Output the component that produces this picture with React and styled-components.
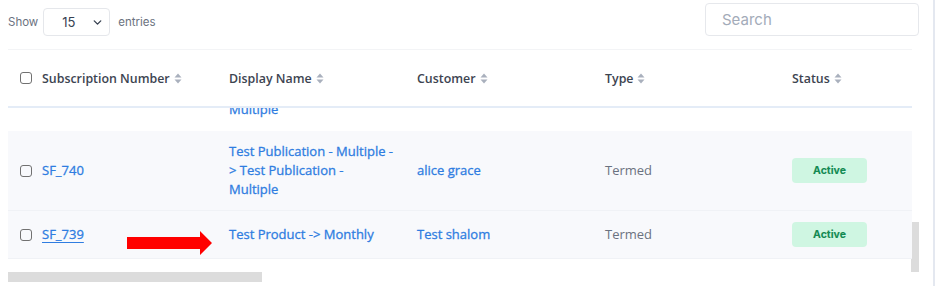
import React from "react";
import styled, { createGlobalStyle } from "styled-components";
import { ChevronDown } from "lucide-react";

const GlobalStyle = createGlobalStyle`
  html, body {
    margin: 0;
    padding: 0;
    background: #fff;
  }
  body {
    font-family: "Open Sans", "Noto Sans", sans-serif;
  }
`;

const Page = styled.div`
  width: 933px;
  height: 286px;
  border-right: 2px solid #e4e8f0;
  overflow: hidden;
`;

const Toolbar = styled.div`
  display: flex;
  justify-content: space-between;
  align-items: flex-start;
  width: 919px;
  height: 49px;
  padding-left: 8px;
  box-sizing: border-box;
`;

const Length = styled.label`
  display: flex;
  align-items: center;
  margin-top: 8px;
  font-family: Inter, "Noto Sans", sans-serif;
  font-size: 11.5px;
  color: #6b7280;
`;

const Select = styled.div`
  display: flex;
  align-items: center;
  justify-content: space-between;
  box-sizing: border-box;
  width: 67px;
  height: 28px;
  margin: 0 8px 0 5px;
  padding: 0 5px 0 18px;
  border: 1px solid #e5e7eb;
  border-radius: 4px;
  font-size: 13px;
  color: #374151;
`;

const Search = styled.input`
  box-sizing: border-box;
  width: 214px;
  height: 33px;
  margin-top: 3px;
  padding: 0 16px;
  border: 1px solid #e6e8ec;
  border-radius: 4px;
  font-family: Inter, "Noto Sans", sans-serif;
  font-size: 15px;
  color: #374151;
  outline: none;

  &::placeholder {
    color: #a3abb9;
  }
`;

const TableArea = styled.div`
  display: flex;
  padding-left: 8px;
`;

const TableFrame = styled.div`
  position: relative;
  width: 904px;
`;

const cols = "209px 188px 188px 187px 132px";

const HeadRow = styled.div`
  display: grid;
  grid-template-columns: ${cols};
  align-items: center;
  height: 59px;
  box-sizing: border-box;
  border-top: 1px solid #f3f4f6;
  border-bottom: 2px solid #e4ecf7;
`;

const HeadCell = styled.div`
  display: flex;
  align-items: center;
  gap: 4px;
  padding: 0 12px;
  font-size: 12.4px;
  font-weight: 600;
  color: #3d4451;
  white-space: nowrap;
`;

const Box = styled.span`
  display: inline-block;
  box-sizing: border-box;
  width: 12px;
  height: 12px;
  margin-right: 6px;
  border: 1.5px solid #717171;
  border-radius: 3px;
  flex: none;
`;

const Viewport = styled.div`
  display: flex;
  flex-direction: column;
  justify-content: flex-end;
  height: 164px;
  overflow: hidden;
  padding-bottom: 13px;
  box-sizing: border-box;
`;

const Row = styled.div`
  display: grid;
  grid-template-columns: ${cols};
  align-items: center;
  flex: none;
  background: ${(p) => (p.$shade ? "#f8f9fc" : "#fff")};
  border-bottom: 1px solid ${(p) => (p.$shade ? "#f0f2f6" : "#fff")};
`;

const Cell = styled.div`
  display: flex;
  align-items: center;
  gap: 4px;
  padding: 11px 10px 11px 12px;
  font-size: 13px;
  line-height: 19px;
  color: ${(p) => (p.$muted ? "#6b7280" : "#2f7de1")};
  -webkit-text-stroke: ${(p) => (p.$muted ? "0" : "0.3px")};
`;

const LinkText = styled.span`
  text-decoration: ${(p) => (p.$under ? "underline" : "none")};
  text-underline-offset: 3px;
`;

const Badge = styled.span`
  display: inline-flex;
  align-items: center;
  justify-content: center;
  width: 75px;
  height: 25px;
  border-radius: 4px;
  background: #cff6e2;
  color: #138a52;
  font-family: Inter, "Noto Sans", sans-serif;
  font-size: 10.5px;
  font-weight: 700;
  -webkit-text-stroke: 0.1px;
`;

const VScroll = styled.div`
  display: flex;
  flex-direction: column;
  justify-content: flex-end;
  width: 8px;
  margin-left: -1px;
`;

const VThumb = styled.div`
  height: 50px;
  background: #dcdcdc;
`;

const HScroll = styled.div`
  width: 254px;
  height: 10px;
  margin-left: 8px;
  background: #dcdcdc;
`;

const Arrow = styled.svg`
  position: absolute;
  left: 119px;
  top: 182px;
`;

const SortIcon = () => (
  <svg width="8" height="11" viewBox="0 0 8 11">
    <path d="M4 0.5 L7.5 4.5 H0.5 Z" fill="#a9b0bd" />
    <path d="M4 10.5 L7.5 6.5 H0.5 Z" fill="#a9b0bd" />
  </svg>
);

const headers = ["Display Name", "Customer", "Type", "Status"];

const rows = [
  { id: "SF_741", name: "Test Publication - Multiple - > Test Publication - Multiple", customer: "alice grace" },
  { id: "SF_740", name: "Test Publication - Multiple - > Test Publication - Multiple", customer: "alice grace", shade: true },
  { id: "SF_739", name: "Test Product -> Monthly", customer: "Test shalom", shade: true, under: true },
];

export default function App() {
  return (
    <>
      <GlobalStyle />
      <Page>
        <Toolbar>
          <Length>
            Show
            <Select>
              15
              <ChevronDown size={13} strokeWidth={2.5} color="#374151" />
            </Select>
            entries
          </Length>
          <Search placeholder="Search" />
        </Toolbar>
        <TableArea>
          <TableFrame>
            <HeadRow>
              <HeadCell>
                <Box />
                Subscription Number <SortIcon />
              </HeadCell>
              {headers.map((h) => (
                <HeadCell key={h}>
                  {h} <SortIcon />
                </HeadCell>
              ))}
            </HeadRow>
            <Viewport>
              {rows.map((r) => (
                <Row key={r.id} $shade={r.shade}>
                  <Cell>
                    <Box />
                    <LinkText $under={r.under}>{r.id}</LinkText>
                  </Cell>
                  <Cell>{r.name}</Cell>
                  <Cell>{r.customer}</Cell>
                  <Cell $muted>Termed</Cell>
                  <Cell>
                    <Badge>Active</Badge>
                  </Cell>
                </Row>
              ))}
            </Viewport>
            <Arrow width="86" height="26" viewBox="0 0 86 26">
              <path d="M0 6 H73 V0 L85 12 L73 24 V18 H0 Z" fill="#ff0000" />
            </Arrow>
          </TableFrame>
          <VScroll>
            <VThumb />
          </VScroll>
        </TableArea>
        <HScroll />
      </Page>
    </>
  );
}
